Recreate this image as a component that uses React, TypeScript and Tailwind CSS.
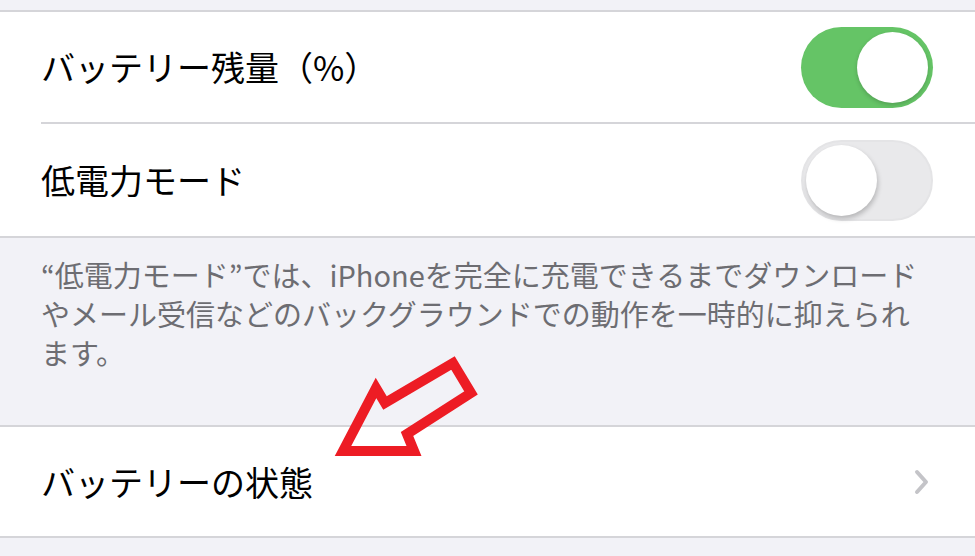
import type { ReactNode } from 'react'

const font = { fontFamily: '"Noto Sans CJK JP", "Noto Sans", sans-serif' }

function Toggle({ on }: { on: boolean }) {
  return on ? (
    <div className="flex h-[81px] w-[132px] items-center justify-end rounded-full bg-[#65c466] pr-[5px]">
      <div className="h-[71px] w-[71px] rounded-full bg-white shadow-[0_2px_4px_rgba(0,0,0,0.18)]" />
    </div>
  ) : (
    <div className="flex h-[81px] w-[132px] items-center rounded-full border-2 border-[#e4e4e6] bg-[#e9e9eb] pl-[3px]">
      <div className="h-[71px] w-[71px] rounded-full bg-white shadow-[1px_3px_5px_rgba(0,0,0,0.22)]" />
    </div>
  )
}

function Row({ label, right, divider, short }: { label: string; right: ReactNode; divider?: boolean; short?: boolean }) {
  return (
    <div className={`flex items-center pl-[41px] ${short ? 'h-[109px]' : 'h-[112px]'}`}>
      <div
        className={`flex h-full flex-1 items-center pr-[42px] ${divider ? 'border-b-2 border-[#d5d5d9]' : ''}`}
      >
        <span className="flex-1 text-[34px] leading-none text-black">{label}</span>
        {right}
      </div>
    </div>
  )
}

function Chevron() {
  return (
    <svg width="16" height="26" viewBox="0 0 16 26" className="mr-[3px]">
      <path d="M3 3 L12 13 L3 23" fill="none" stroke="#c4c4c8" strokeWidth="4" strokeLinecap="round" strokeLinejoin="round" />
    </svg>
  )
}

export default function App() {
  return (
    <div style={font} className="relative h-[556px] w-[975px] overflow-hidden bg-[#f2f2f7]">
      <div className="h-[10px]" />

      {/* toggles group */}
      <div className="border-y-2 border-[#d5d5d9] bg-white">
        <Row label="バッテリー残量（%）" right={<Toggle on />} divider />
        <Row label="低電力モード" right={<Toggle on={false} />} />
      </div>

      {/* footer note */}
      <div className="h-[187px] whitespace-nowrap px-[41px] pt-[17px] text-[29px] leading-[39px] text-[#6d6d72]">
        “低電力モード”では、iPhoneを完全に充電できるまでダウンロード
        <br />
        やメール受信などのバックグラウンドでの動作を一時的に抑えられ
        <br />
        ます。
      </div>

      {/* battery health */}
      <div className="border-y-2 border-[#d5d5d9] bg-white">
        <Row label="バッテリーの状態" right={<Chevron />} short />
      </div>

      {/* annotation arrow */}
      <svg className="pointer-events-none absolute inset-0" width="975" height="556" viewBox="0 0 975 556">
        <polygon
          points="343,451 376,388 385,403 453,363 471,393 407,434 414,451"
          fill="none"
          stroke="#ed1c24"
          strokeWidth="10"
          strokeLinejoin="miter"
        />
      </svg>
    </div>
  )
}
